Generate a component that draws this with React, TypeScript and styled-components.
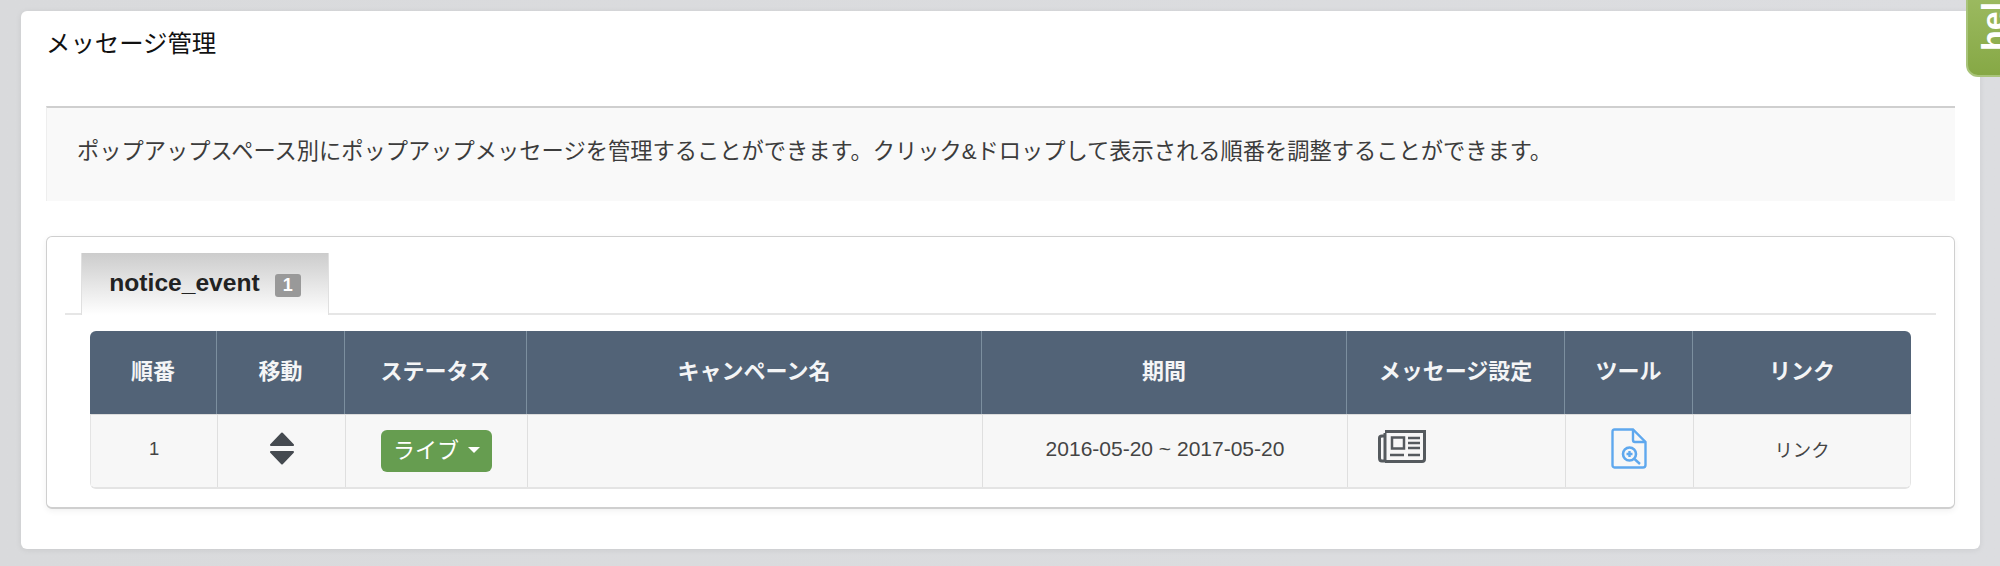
import styled, { createGlobalStyle } from 'styled-components'

const columns = '127px 128px 182px 455px 365px 218px 128px 1fr'
const headers = ['順番', '移動', 'ステータス', 'キャンペーン名', '期間', 'メッセージ設定', 'ツール', 'リンク']

export default function App() {
  return (
    <Page>
      <GlobalStyle />
      <HelpTab>
        <HelpLabel>help</HelpLabel>
      </HelpTab>
      <Panel>
        <Title>メッセージ管理</Title>
        <Notice>
          ポップアップスペース別にポップアップメッセージを管理することができます。クリック&ドロップして表示される順番を調整することができます。
        </Notice>
        <Card>
          <TabBar>
            <Tab>
              notice_event
              <Badge>1</Badge>
            </Tab>
          </TabBar>
          <Table>
            <HeadRow>
              {headers.map(h => (
                <HeadCell key={h}>{h}</HeadCell>
              ))}
            </HeadRow>
            <BodyRow>
              <Cell>1</Cell>
              <Cell>
                <SortIcon />
              </Cell>
              <Cell>
                <StatusButton>
                  ライブ
                  <Caret />
                </StatusButton>
              </Cell>
              <Cell />
              <DateCell>2016-05-20 ~ 2017-05-20</DateCell>
              <NewsCell>
                <NewsIcon />
              </NewsCell>
              <DocCell>
                <DocIcon />
              </DocCell>
              <Cell>リンク</Cell>
            </BodyRow>
          </Table>
        </Card>
      </Panel>
    </Page>
  )
}

function SortIcon() {
  return (
    <svg width="24" height="33" viewBox="0 0 24 33" fill="#454a50" stroke="#454a50" strokeWidth="2" strokeLinejoin="round">
      <path d="M12 1.5 L23 13 H1 Z" />
      <path d="M1 20 H23 L12 31.5 Z" />
    </svg>
  )
}

function NewsIcon() {
  return (
    <svg width="48" height="33" viewBox="0 0 48 33" fill="none" stroke="#555a5e">
      <path d="M7 3 V30 M7 31 H4 Q1.5 31 1.5 28 V8 Q1.5 6 4 6 H7" strokeWidth="3" />
      <path d="M7 1.5 H46.5 V29 Q46.5 31.5 44 31.5 H7" strokeWidth="3" />
      <rect x="14" y="7.5" width="12" height="11" strokeWidth="2.5" />
      <path d="M30 8 H42 M30 13 H42 M30 18 H42 M12 25 H26 M30 25 H42" strokeWidth="2.5" />
    </svg>
  )
}

function DocIcon() {
  return (
    <svg width="36" height="41" viewBox="0 0 36 41" fill="none" stroke="#5fa8ee" strokeWidth="2.4">
      <path d="M3.5 1.5 H22 L34.5 14 V37 Q34.5 39.5 32 39.5 H3.5 Q1.5 39.5 1.5 37 V4 Q1.5 1.5 3.5 1.5 Z" />
      <path d="M22 1.5 V12 Q22 14 24 14 H34.5" />
      <circle cx="18.5" cy="26" r="6.5" strokeWidth="2.6" />
      <path d="M15.5 26 H21.5 M18.5 23 V29 M23.5 31 L29 36" />
    </svg>
  )
}

const GlobalStyle = createGlobalStyle`
  html, body {
    margin: 0;
    padding: 0;
    height: 566px;
    overflow: hidden;
    background: #d9dadc;
  }
  * {
    box-sizing: border-box;
  }
  body {
    font-family: 'Liberation Sans', 'Noto Sans CJK JP', sans-serif;
  }
`

const Page = styled.div`
  position: relative;
  width: 2000px;
  height: 566px;
  padding: 11px 20px 0 21px;
  overflow: hidden;
  background: linear-gradient(to right, #d9dadc 0, #dcdde0 100%);
`

const Panel = styled.div`
  height: 538px;
  padding: 0 25px;
  background: #fff;
  border-radius: 6px;
  box-shadow: 0 1px 6px rgba(0, 0, 0, 0.08);
`

const Title = styled.h1`
  height: 95px;
  margin: 0;
  padding-top: 20px;
  font-size: 24.4px;
  line-height: 26px;
  font-weight: 400;
  color: #111;
`

const Notice = styled.div`
  display: flex;
  align-items: center;
  height: 95px;
  padding: 0 0 11px 30px;
  background: #f9f9f9;
  border-top: 2px solid #cfcfcf;
  border-left: 1px solid #eee;
  font-size: 22.25px;
  color: #3c3c3c;
  white-space: nowrap;
`

const Card = styled.div`
  height: 273px;
  margin-top: 35px;
  background: #fff;
  border: 1px solid #cfcfcf;
  border-bottom-width: 2px;
  border-radius: 6px;
  box-shadow: 0 2px 6px rgba(0, 0, 0, 0.06);
`

const TabBar = styled.div`
  display: flex;
  height: 78px;
  margin: 0 18px;
  padding: 16px 0 0 16px;
  border-bottom: 2px solid #e6e6e6;
`

const Tab = styled.div`
  display: flex;
  align-items: center;
  justify-content: center;
  width: 248px;
  height: 62px;
  padding-bottom: 2px;
  background: linear-gradient(to bottom, #cccccc 0, #ffffff 100%);
  border-left: 1px solid #e0e0e0;
  border-right: 1px solid #e0e0e0;
  font-size: 24.6px;
  font-weight: 700;
  color: #222;
`

const Badge = styled.span`
  display: inline-flex;
  align-items: center;
  justify-content: center;
  width: 26px;
  height: 23px;
  margin-left: 15px;
  margin-top: 4px;
  background: #999;
  border-radius: 3px;
  font-size: 18px;
  font-weight: 700;
  color: #fff;
`

const Table = styled.div`
  width: 1821px;
  margin: 16px 0 0 43px;
  border-radius: 6px;
  overflow: hidden;
  border-bottom: 2px solid #e4e4e4;
`

const HeadRow = styled.div`
  display: grid;
  grid-template-columns: ${columns};
  height: 83px;
  background: #526377;
`

const HeadCell = styled.div`
  display: flex;
  align-items: center;
  justify-content: center;
  padding-bottom: 7px;
  border-right: 1px solid #7c8f9f;
  font-size: 22px;
  font-weight: 700;
  color: #f4f5f6;

  &:last-child {
    border-right: 0;
  }
`

const BodyRow = styled.div`
  display: grid;
  grid-template-columns: ${columns};
  height: 73px;
  background: #f7f7f7;
  border-left: 1px solid #e4e4e4;
  border-right: 1px solid #e4e4e4;
  border-top: 1px solid #dcdcdc;
`

const Cell = styled.div`
  display: flex;
  align-items: center;
  justify-content: center;
  border-right: 1px solid #dfdfdf;
  font-size: 18.4px;
  color: #444;
  padding-bottom: 5px;

  &:last-child {
    border-right: 0;
  }
`

const DateCell = styled(Cell)`
  font-size: 21px;
`

const NewsCell = styled(Cell)`
  justify-content: flex-start;
  padding: 0 0 10px 30px;
`

const DocCell = styled(Cell)`
  padding: 0 2px 6px 0;
`

const StatusButton = styled.span`
  display: inline-flex;
  align-items: center;
  justify-content: center;
  width: 111px;
  height: 42px;
  margin-top: 5px;
  padding-bottom: 7px;
  background: #669d50;
  border-radius: 6px;
  font-size: 22px;
  color: #fff;
`

const Caret = styled.span`
  width: 0;
  height: 0;
  margin: 4px 0 0 9px;
  border-left: 6px solid transparent;
  border-right: 6px solid transparent;
  border-top: 6px solid #fff;
`

const HelpTab = styled.div`
  position: absolute;
  top: -10px;
  right: -20px;
  width: 54px;
  height: 87px;
  padding: 0;
  background: linear-gradient(to bottom, #9dbb62 0, #86a845 100%);
  border: 2px solid #a9c47a;
  border-radius: 0 0 0 12px;
  overflow: hidden;
  z-index: 2;
`

const HelpLabel = styled.span`
  position: absolute;
  left: 8px;
  bottom: 24px;
  font-size: 34px;
  line-height: 34px;
  font-weight: 700;
  color: #fff;
  writing-mode: vertical-rl;
  transform: rotate(180deg);
`
